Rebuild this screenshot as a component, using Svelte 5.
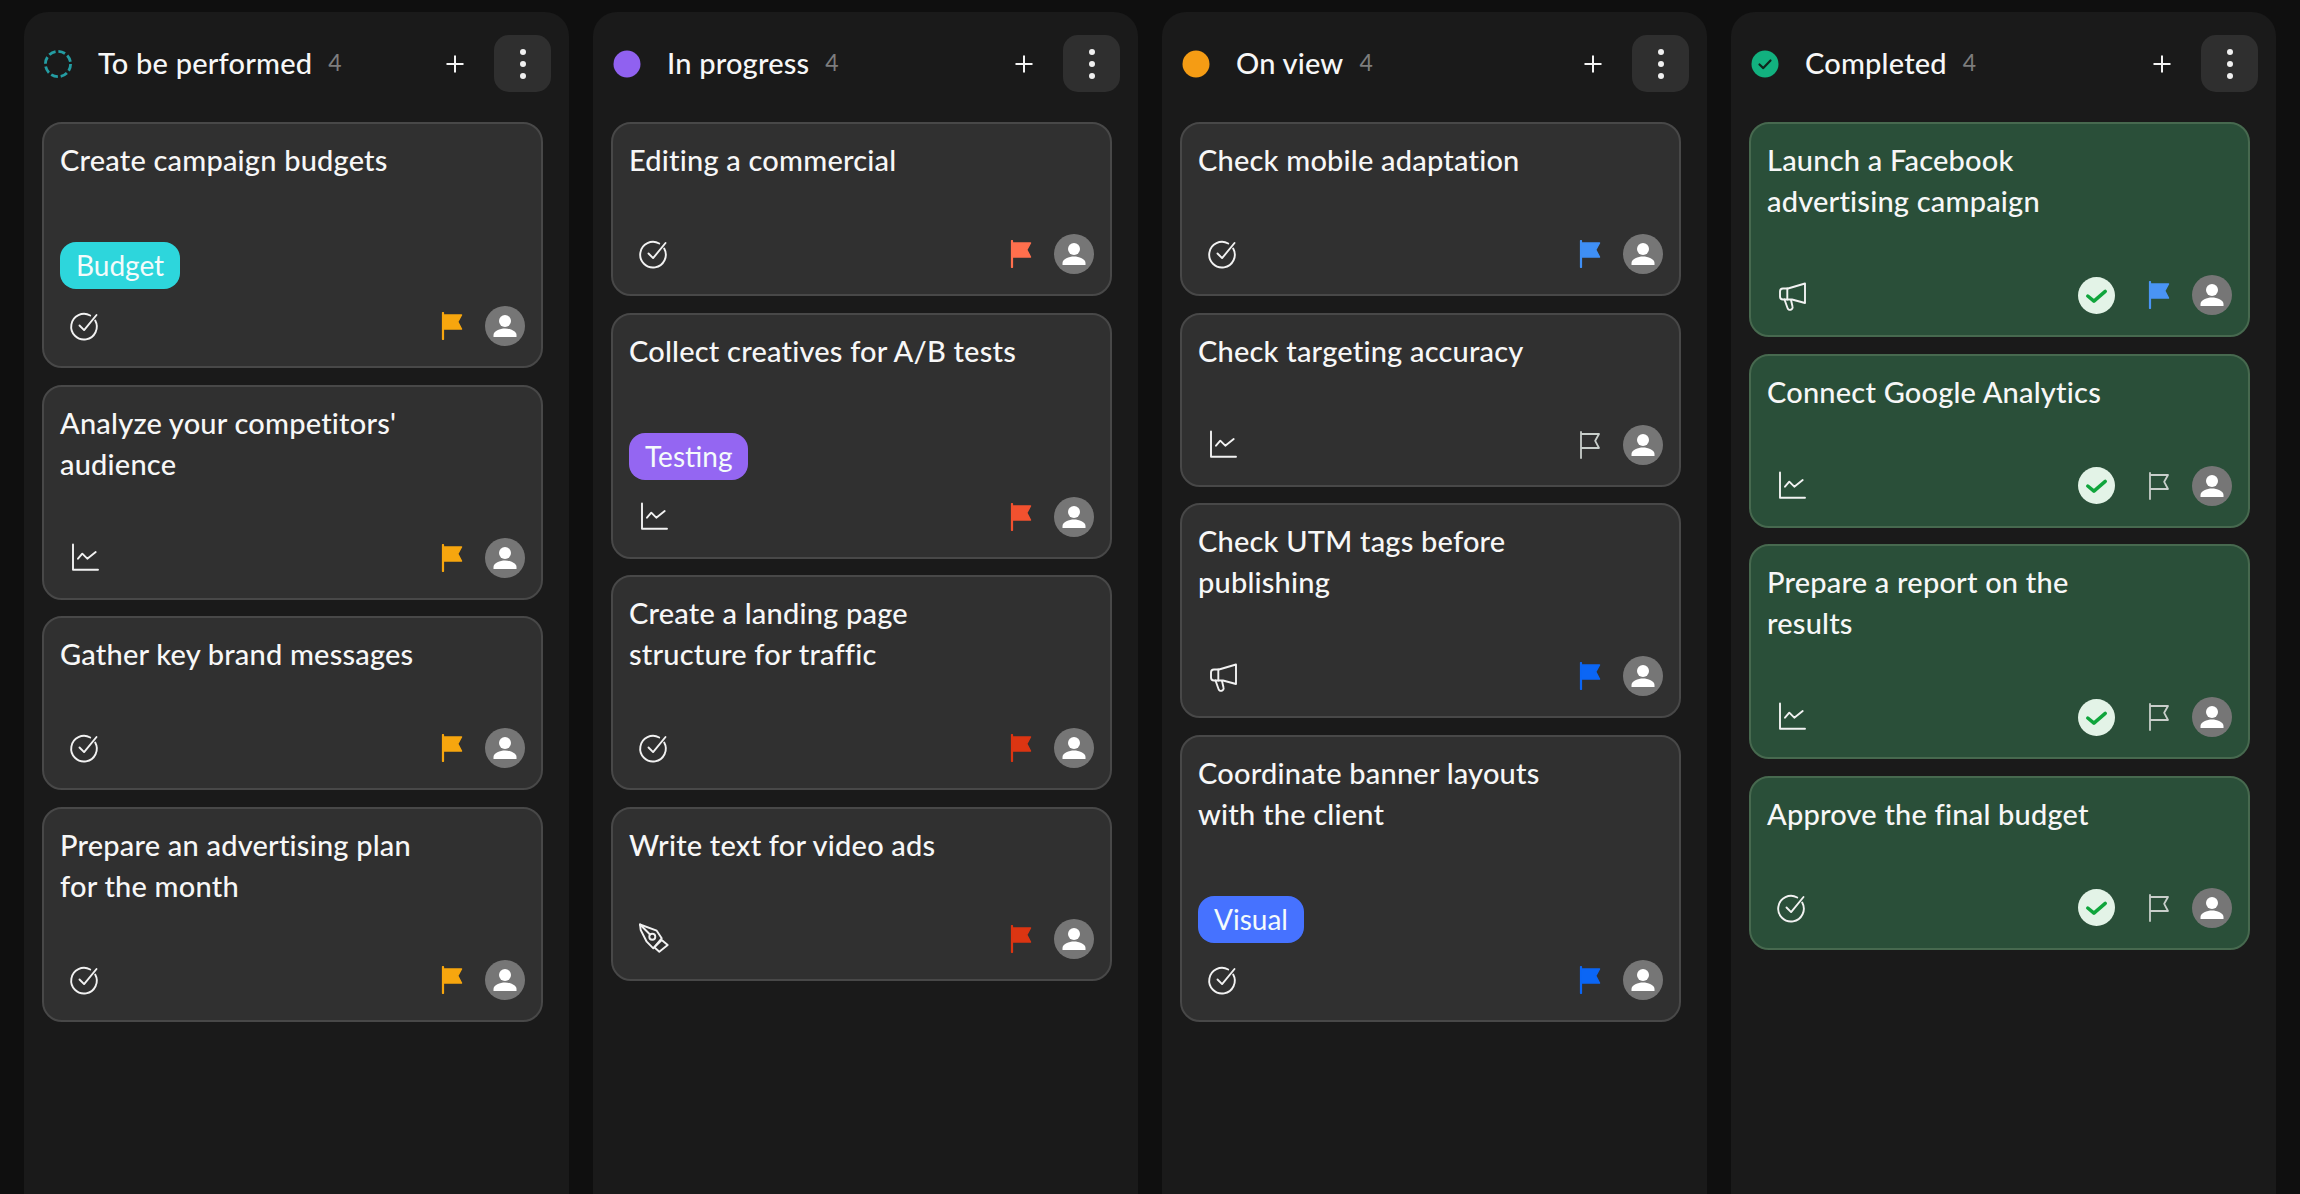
<script lang="ts">
  type Task = {
    title: string[];
    icon: string;
    flag: string;
    tag?: { label: string; color: string };
    done?: boolean;
  };

  const columns: { name: string; status: string; tasks: Task[] }[] = [
    {
      name: "To be performed",
      status: "todo",
      tasks: [
        { title: ["Create campaign budgets"], icon: "check", flag: "#f7a60e", tag: { label: "Budget", color: "#2dd6dc" } },
        { title: ["Analyze your competitors'", "audience"], icon: "chart", flag: "#f7a60e" },
        { title: ["Gather key brand messages"], icon: "check", flag: "#f7a60e" },
        { title: ["Prepare an advertising plan", "for the month"], icon: "check", flag: "#f7a60e" },
      ],
    },
    {
      name: "In progress",
      status: "progress",
      tasks: [
        { title: ["Editing a commercial"], icon: "check", flag: "#ff6f4d" },
        { title: ["Collect creatives for A/B tests"], icon: "chart", flag: "#f2512f", tag: { label: "Testing", color: "#9466f2" } },
        { title: ["Create a landing page", "structure for traffic"], icon: "check", flag: "#dc3512" },
        { title: ["Write text for video ads"], icon: "pen", flag: "#dc3512" },
      ],
    },
    {
      name: "On view",
      status: "review",
      tasks: [
        { title: ["Check mobile adaptation"], icon: "check", flag: "#3f8ff5" },
        { title: ["Check targeting accuracy"], icon: "chart", flag: "" },
        { title: ["Check UTM tags before", "publishing"], icon: "horn", flag: "#0b66f5" },
        { title: ["Coordinate banner layouts", "with the client"], icon: "check", flag: "#0b66f5", tag: { label: "Visual", color: "#4672ff" } },
      ],
    },
    {
      name: "Completed",
      status: "done",
      tasks: [
        { title: ["Launch a Facebook", "advertising campaign"], icon: "horn", flag: "#4a94f5", done: true },
        { title: ["Connect Google Analytics"], icon: "chart", flag: "", done: true },
        { title: ["Prepare a report on the", "results"], icon: "chart", flag: "", done: true },
        { title: ["Approve the final budget"], icon: "check", flag: "", done: true },
      ],
    },
  ];
</script>

{#snippet statusIcon(status: string)}
  <svg class="status" viewBox="0 0 28 28">
    {#if status === "todo"}
      <circle cx="14" cy="14" r="12.6" fill="none" stroke="#249da3" stroke-width="2.8" stroke-dasharray="7 2.9" />
    {:else if status === "progress"}
      <circle cx="14" cy="14" r="13.5" fill="#9061f0" />
    {:else if status === "review"}
      <circle cx="14" cy="14" r="13.5" fill="#f59c14" />
    {:else}
      <circle cx="14" cy="14" r="13.5" fill="#12b17f" />
      <path d="M8.5 14.500l3.800 3.600 7.200-7.600" fill="none" stroke="#10261d" stroke-width="2.200" stroke-linecap="round" stroke-linejoin="round" />
    {/if}
  </svg>
{/snippet}

{#snippet taskIcon(name: string)}
  <svg class="task-icon" viewBox="0 0 32 32" fill="none" stroke="#f2f2f2" stroke-width="1.900" stroke-linecap="round" stroke-linejoin="round">
    {#if name === "check"}
      <path d="M26.200 10.500a12.800 12.800 0 1 1-5-5" />
      <path d="M10.500 15.500l4.600 4.600L27.500 5" />
    {:else if name === "chart"}
      <path d="M4 2.500V27.700h25" />
      <path d="M9 16.700l4.300-5 5 5 8.400-6.700" />
    {:else if name === "pen"}
      <path d="M2 1.500l16.700 6.200 5 7.600-8.400 10-6.600-6.600L2.700 7z" />
      <path d="M2 1.500l10 10" />
      <circle cx="14.300" cy="13.700" r="3" />
      <path d="M23.700 17l6 5-8.400 6.700-5-4.400z" />
    {:else}
      <path d="M29 4.500V24l-13-3.500H7a3 3 0 0 1-3-3v-5a3 3 0 0 1 3-3h5z" />
      <path d="M11.300 9.500v11" />
      <path d="M8.500 20.500l3 8.500a2.600 2.600 0 0 0 5-1.500l-1.500-6.500" />
    {/if}
  </svg>
{/snippet}

{#snippet flagIcon(color: string)}
  {#if color}
    <svg class="flag" viewBox="0 0 22 28" style:color={color}>
      <path d="M2 1v26" fill="none" stroke="currentColor" stroke-width="2.200" stroke-linecap="round" />
      <path d="M2 3h18.500l-3.800 6.800 3.800 7.200H2z" fill="currentColor" stroke="currentColor" stroke-width="1.500" stroke-linejoin="round" />
    </svg>
  {:else}
    <svg class="flag" viewBox="0 0 22 28" fill="none" stroke="#c9cfcb" stroke-width="1.800" stroke-linejoin="round">
      <path d="M2 1v26" stroke-linecap="round" />
      <path d="M2 3h18l-3.800 6.800L20 17H2" />
    </svg>
  {/if}
{/snippet}

<main class="board">
  {#each columns as col}
    <section class="column">
      <header class="col-head">
        {@render statusIcon(col.status)}
        <h2>{col.name}</h2>
        <span class="count">{col.tasks.length}</span>
        <svg class="plus" viewBox="0 0 20 20">
          <path d="M10 1.500v17M1.500 10h17" stroke="#f5f5f5" stroke-width="2" />
        </svg>
        <button class="menu" aria-label="Column menu">
          <i></i><i></i><i></i>
        </button>
      </header>

      <div class="cards">
        {#each col.tasks as task}
          <article class="card" class:done={task.done}>
            <h3>
              {#each task.title as line}
                <span>{line}</span>
              {/each}
            </h3>
            {#if task.tag}
              <span class="tag" style:background={task.tag.color}>{task.tag.label}</span>
            {/if}
            <footer>
              {@render taskIcon(task.icon)}
              {#if task.done}
                <svg class="done-badge" viewBox="0 0 36 36">
                  <circle cx="18" cy="18" r="18" fill="#e3f3e7" />
                  <path d="M9.500 18.500l6 5 11-9.500" fill="none" stroke="#10a53c" stroke-width="3.400" stroke-linecap="round" stroke-linejoin="round" />
                </svg>
              {/if}
              {@render flagIcon(task.flag)}
              <svg class="avatar" viewBox="0 0 40 40">
                <circle cx="20" cy="20" r="20" fill="#767676" />
                <circle cx="20" cy="15" r="6" fill="#fff" />
                <path d="M8.500 31v-2c0-4 6.500-6.500 11.500-6.500s11.500 2.500 11.500 6.500v2z" fill="#fff" />
              </svg>
            </footer>
          </article>
        {/each}
      </div>
    </section>
  {/each}
</main>

<style>
  :global(body) {
    margin: 0;
    background: #0f0f0f;
    font-family: Lato, "Open Sans", sans-serif;
    color: #f7f7f7;
  }

  .board {
    height: 1194px;
    box-sizing: border-box;
    padding: 12px 24px 0;
    display: grid;
    grid-template-columns: repeat(4, 1fr);
    gap: 24px;
    overflow: hidden;
  }

  .column {
    background: #1a1a1a;
    border-radius: 24px 24px 0 0;
    padding: 23px 26px 0 18px;
  }

  .col-head {
    display: flex;
    align-items: center;
    height: 57px;
    margin-right: -8px;
    margin-bottom: 30px;
  }

  .status {
    width: 28px;
    height: 28px;
    margin-left: 2px;
    margin-right: 26px;
  }

  h2 {
    margin: 0 0 3px;
    font-size: 29px;
    font-weight: 500;
    letter-spacing: 0.2px;
  }

  .count {
    margin-left: 16px;
    margin-bottom: 3px;
    font-size: 23px;
    color: #7d7d7d;
  }

  .plus {
    width: 20px;
    height: 20px;
    margin-left: auto;
    margin-right: 29px;
  }

  .menu {
    width: 57px;
    height: 57px;
    border: 0;
    border-radius: 15px;
    background: #2f2f2f;
    display: flex;
    flex-direction: column;
    align-items: center;
    justify-content: center;
    gap: 6px;
    padding: 0;
  }

  .menu i {
    width: 6px;
    height: 6px;
    border-radius: 50%;
    background: #f0f0f0;
  }

  .cards {
    display: flex;
    flex-direction: column;
    gap: 16.5px;
  }

  .card {
    background: #303030;
    border: 2px solid #484848;
    border-radius: 20px;
    padding: 15px 16px 20px;
    display: flex;
    flex-direction: column;
    align-items: flex-start;
  }

  .card.done {
    background: #2a4f39;
    border-color: #47694f;
  }

  h3 {
    margin: 0 0 54px;
    font-size: 29px;
    font-weight: 500;
    line-height: 41px;
    letter-spacing: 0.2px;
  }

  h3 span {
    display: block;
  }

  .tag {
    height: 47px;
    line-height: 46px;
    padding: 0 16px;
    margin: 8px 0 17px;
    border-radius: 16px;
    font-size: 28px;
    color: #f4fbfb;
  }

  footer {
    align-self: stretch;
    height: 40px;
    display: flex;
    align-items: center;
    justify-content: flex-end;
  }

  .task-icon {
    width: 32px;
    height: 32px;
    margin-left: 9px;
    margin-right: auto;
  }

  .done-badge {
    width: 37px;
    height: 37px;
    margin-right: 33px;
  }

  .flag {
    width: 22px;
    height: 28px;
    margin-right: 22px;
  }

  .avatar {
    width: 40px;
    height: 40px;
  }
</style>
